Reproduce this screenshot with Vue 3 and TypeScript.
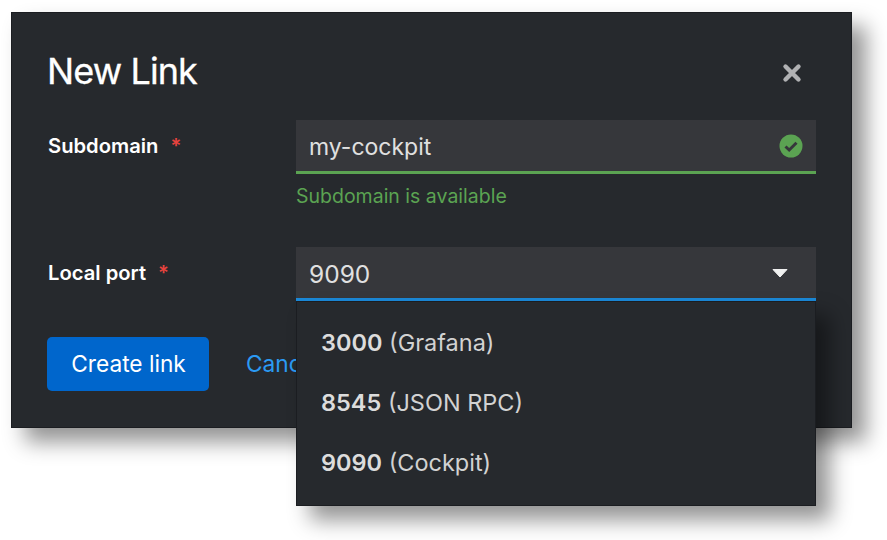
<script setup lang="ts">
interface Port { port: string; name: string }
const ports: Port[] = [
  { port: '3000', name: 'Grafana' },
  { port: '8545', name: 'JSON RPC' },
  { port: '9090', name: 'Cockpit' },
]
</script>

<template>
  <div class="page">
    <section class="modal">
      <header class="head">
        <h1 class="title">New Link</h1>
        <button class="close" aria-label="Close">
          <svg width="20" height="20" viewBox="0 0 20 20">
            <path d="M3.5 3.5 16.5 16.5M16.5 3.5 3.5 16.5" stroke="#b0b1b3" stroke-width="4.4" stroke-linecap="round" />
          </svg>
        </button>
      </header>

      <div class="row first">
        <label class="label">Subdomain<span class="req">*</span></label>
        <div class="field">
          <div class="input ok">
            <span class="val">my-cockpit</span>
            <svg class="check" width="24" height="24" viewBox="0 0 24 24">
              <circle cx="12" cy="12" r="11.5" fill="#5ba352" />
              <path d="M6.5 12.5 10.2 16 17.5 8.8" fill="none" stroke="#36373b" stroke-width="3" />
            </svg>
          </div>
          <div class="help">Subdomain is available</div>
        </div>
      </div>

      <div class="row second">
        <label class="label">Local port<span class="req">*</span></label>
        <div class="field">
          <div class="input open">
            <span class="val num">9090</span>
            <svg class="caret" width="16" height="10" viewBox="0 0 16 10">
              <path d="M1 1.5H15L8 9Z" fill="#f0f0f0" stroke="#f0f0f0" stroke-linejoin="round" />
            </svg>
          </div>
          <ul class="menu">
            <li v-for="p in ports" :key="p.port" class="opt"><b>{{ p.port }}</b> ({{ p.name }})</li>
          </ul>
        </div>
      </div>

      <div class="actions">
        <button class="primary">Create link</button>
        <button class="link">Cancel</button>
      </div>
    </section>
  </div>
</template>

<style>
html, body { margin: 0; background: #fff; }
</style>

<style scoped>
.page {
  width: 887px;
  height: 540px;
  padding: 12px 0 0 11px;
  box-sizing: border-box;
  overflow: hidden;
  font-family: "Inter", "Noto Sans", sans-serif;
}
.modal {
  width: 841px;
  height: 416px;
  box-sizing: border-box;
  padding: 0 36px;
  background: #26292d;
  box-shadow: 14px 14px 20px rgba(0, 0, 0, 0.42);
  outline: 1px solid #1b1d21;
  outline-offset: -1px;
}
.head {
  display: flex;
  justify-content: space-between;
  align-items: center;
  height: 108px;
}
.title {
  margin: 10px 0 0;
  font-size: 36px;
  font-weight: 400;
  color: #fff;
  letter-spacing: -0.9px;
  -webkit-text-stroke: 0.3px #fff;
}
.close {
  display: flex;
  padding: 0;
  margin: 14px 14px 0 0;
  border: 0;
  background: none;
}
.row { display: flex; }
.second { margin-top: 37px; }
.label {
  width: 249px;
  padding: 13px 0 0 1px;
  box-sizing: border-box;
  font-size: 20.2px;
  font-weight: 600;
  color: #fff;
  line-height: 26px;
}
.req {
  margin-left: 12px;
  color: #e8433e;
  font-weight: 600;
}
.field {
  position: relative;
  width: 520px;
}
.input {
  display: flex;
  align-items: center;
  justify-content: space-between;
  box-sizing: border-box;
  height: 54px;
  padding: 1px 13px 0 13px;
  background: #36373b;
  color: #e0e0e0;
  font-size: 23px;
}
.val { padding-top: 2px; }
.num { font-size: 24.5px; }
.ok { border-bottom: 3px solid #5ba352; }
.open { border-bottom: 3px solid #1b89d8; }
.caret { margin-right: 15px; }
.help {
  margin-top: 8px;
  height: 28px;
  line-height: 28px;
  font-size: 19.5px;
  color: #5ba352;
}
.menu {
  position: absolute;
  top: 54px;
  left: 0;
  right: 0;
  margin: 0;
  padding: 12px 0;
  height: 205px;
  box-sizing: border-box;
  list-style: none;
  background: #26292d;
  box-shadow: 14px 14px 20px rgba(0, 0, 0, 0.42);
  outline: 1px solid #1b1d21;
  outline-offset: -1px;
  z-index: 2;
}
.opt {
  height: 60px;
  line-height: 60px;
  padding-left: 25px;
  font-size: 23.5px;
  color: #d2d2d2;
}
.opt b { color: #dcdcdc; font-weight: 600; }
.actions {
  display: flex;
  align-items: center;
  margin-top: 36px;
}
.primary {
  width: 162px;
  height: 54px;
  padding: 0 0 2px 1px;
  border: 0;
  border-radius: 5px;
  background: #0066cc;
  color: #fff;
  font: 400 22.7px "Inter", "Noto Sans", sans-serif;
}
.link {
  margin-left: 37px;
  padding: 0 0 2px;
  border: 0;
  background: none;
  color: #2b9af3;
  font: 400 22.7px "Inter", "Noto Sans", sans-serif;
}
</style>
